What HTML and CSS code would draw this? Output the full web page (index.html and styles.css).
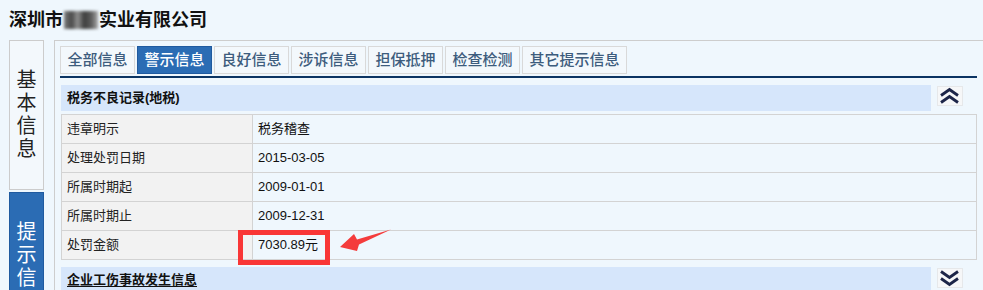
FILE: index.html
```html
<!DOCTYPE html>
<html lang="zh-CN">
<head>
<meta charset="utf-8">
<title>企业信息</title>
<link rel="stylesheet" href="styles.css">
</head>
<body>
<div class="title">深圳市<span class="blur"></span>实业有限公司</div>
<div class="layout">
  <aside class="sidebar">
    <div class="side-tab"><span class="vtext">基本信息</span></div>
    <div class="side-tab active"><span class="vtext">提示信息</span></div>
  </aside>
  <main class="panel">
    <nav class="tabs">
      <span class="tab">全部信息</span>
      <span class="tab active">警示信息</span>
      <span class="tab">良好信息</span>
      <span class="tab">涉诉信息</span>
      <span class="tab">担保抵押</span>
      <span class="tab">检查检测</span>
      <span class="tab">其它提示信息</span>
    </nav>
    <div class="tab-rule"></div>
    <section class="sec">
      <div class="sec-head">
        <div class="sec-title">税务不良记录(地税)</div>
        <span class="toggle">
          <svg width="25" height="20" viewBox="0 0 25 20"><path d="M4 9.5 L12.5 3.5 L21 9.5 M4 16.5 L12.5 10.5 L21 16.5" fill="none" stroke="#1c2548" stroke-width="2.8"/></svg>
        </span>
      </div>
      <div class="grid">
        <div class="row"><div class="k">违章明示</div><div class="v">税务稽查</div></div>
        <div class="row"><div class="k">处理处罚日期</div><div class="v">2015-03-05</div></div>
        <div class="row"><div class="k">所属时期起</div><div class="v">2009-01-01</div></div>
        <div class="row"><div class="k">所属时期止</div><div class="v">2009-12-31</div></div>
        <div class="row"><div class="k">处罚金额</div><div class="v">7030.89元</div></div>
      </div>
    </section>
    <section class="sec">
      <div class="sec-head">
        <div class="sec-title"><u>企业工伤事故发生信息</u></div>
        <span class="toggle">
          <svg width="25" height="20" viewBox="0 0 25 20"><path d="M4 3.5 L12.5 9.5 L21 3.5 M4 10.5 L12.5 16.5 L21 10.5" fill="none" stroke="#1c2548" stroke-width="2.8"/></svg>
        </span>
      </div>
    </section>
  </main>
</div>
<svg class="annot" width="983" height="290" viewBox="0 0 983 290">
  <rect x="240.5" y="232.5" width="87" height="30" fill="none" stroke="#f93636" stroke-width="5"/>
  <polygon points="340,247 354,234 357,239.5 391,229.5 359,244.5 357,251" fill="#f43c3c"/>
</svg>
</body>
</html>
```

FILE: styles.css
```css
html, body {
  margin: 0;
  padding: 0;
  overflow: hidden;
}
body {
  background: #eff7fd;
  font-family: "Liberation Sans", "Noto Sans CJK SC", sans-serif;
  color: #222;
  position: relative;
  width: 983px;
  height: 290px;
}
.title {
  box-sizing: border-box;
  height: 40px;
  padding: 11px 0 0 9px;
  font-size: 18px;
  line-height: 18px;
  font-weight: bold;
  color: #111;
  white-space: nowrap;
}
.blur {
  display: inline-block;
  width: 34px;
  height: 18px;
  margin: 0 1px;
  vertical-align: -3px;
  background: linear-gradient(90deg, #7a7a7a 0%, #4a4a4a 22%, #8f8f8f 40%, #3e3e3e 60%, #5c5c5c 80%, #a8a8a8 100%);
  filter: blur(1.4px);
}
.layout {
  display: flex;
  align-items: flex-start;
  padding-left: 9px;
}
.sidebar {
  display: flex;
  flex-direction: column;
  gap: 2px;
  width: 35px;
  flex: none;
}
.side-tab {
  box-sizing: border-box;
  height: 150px;
  border: 1px solid #cccccc;
  background: #f3f8fc;
  display: flex;
  align-items: center;
  justify-content: center;
  font-size: 20px;
  line-height: 23px;
  color: #222;
}
.side-tab.active {
  background: #2b6cb4;
  border-color: #1f5a9f;
  color: #fff;
}
.vtext {
  width: 20px;
  text-align: center;
}
.panel {
  flex: none;
  margin-left: 10px;
  width: 917px;
  padding: 5px 9px 5px 5px;
  border-top: 1px solid #cdcdcd;
  border-left: 1px solid #cdcdcd;
  min-height: 400px;
}
.tabs {
  display: flex;
  gap: 2px;
}
.tab {
  box-sizing: border-box;
  height: 28px;
  padding: 0 6.5px;
  border: 1px solid #d9d9d9;
  background: #f3f8fc;
  font-size: 15px;
  line-height: 26px;
  font-weight: 500;
  color: #3d5c7d;
  white-space: nowrap;
}
.tab.active {
  background: #2b6cb4;
  border-color: #1f5a9f;
  color: #fff;
}
.tab-rule {
  height: 2px;
  margin-top: 2px;
  background: #0b3463;
}
.sec {
  margin: 7px 0 0 1px;
}
.sec-head {
  display: flex;
  align-items: flex-start;
  gap: 6px;
}
.sec-title {
  box-sizing: border-box;
  width: 870px;
  height: 26px;
  padding-left: 6px;
  background: #d6e6fb;
  font-size: 13px;
  line-height: 26px;
  font-weight: bold;
  color: #111;
}
.sec-title u {
  text-underline-offset: 2px;
}
.toggle {
  box-sizing: border-box;
  display: block;
  width: 26px;
  height: 20px;
  margin-top: 1px;
  background: #f6f7f8;
  border: 1px solid #e6e8ea;
}
.toggle svg {
  display: block;
  margin: -1px 0 0 -1px;
}
.grid {
  margin-top: 3px;
  width: 916px;
  box-sizing: border-box;
  border: 1px solid #d3d3d3;
  border-bottom: none;
}
.row {
  display: flex;
  box-sizing: border-box;
  height: 29px;
  border-bottom: 1px solid #d3d3d3;
  font-size: 13px;
  line-height: 28px;
}
.k {
  box-sizing: border-box;
  width: 191px;
  padding-left: 5px;
  background: #f2f2f2;
  border-right: 1px solid #d3d3d3;
  color: #222;
}
.v {
  flex: 1;
  padding-left: 5px;
  color: #111;
}
.annot {
  position: absolute;
  left: 0;
  top: 0;
  pointer-events: none;
}
```
